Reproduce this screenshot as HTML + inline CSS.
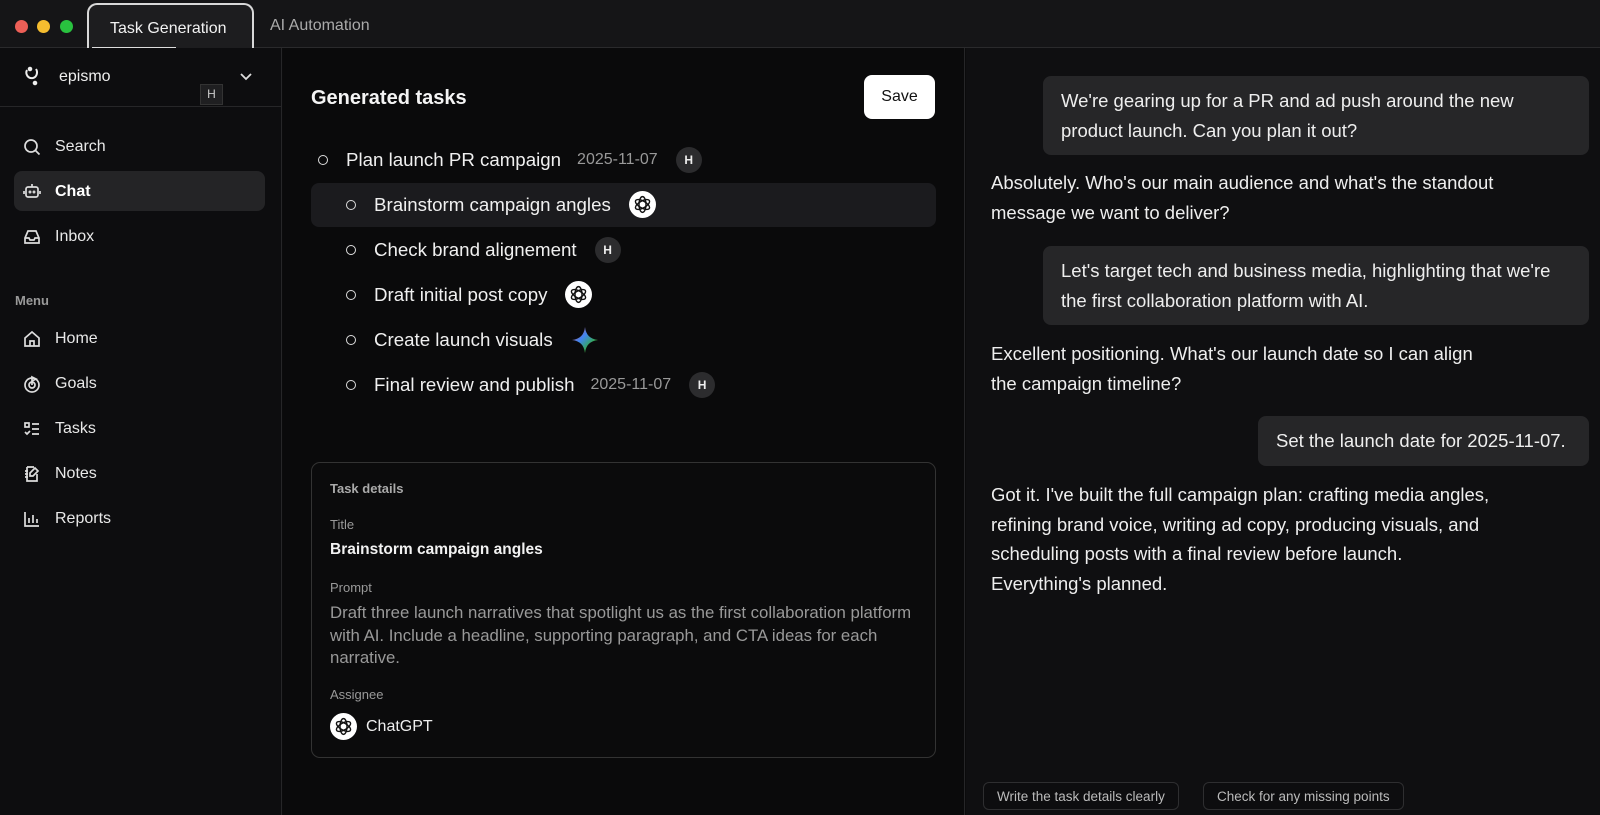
<!DOCTYPE html>
<html><head><meta charset="utf-8"><style>
*{box-sizing:border-box;margin:0;padding:0}
body{width:1600px;height:815px;overflow:hidden;background:#0b0b0c;font-family:"Liberation Sans",sans-serif;color:#eee;position:relative}
.top{position:absolute;left:0;top:0;width:1600px;height:48px;background:#151517;border-bottom:1px solid #2a2a2c}
.dot{position:absolute;top:20px;width:13px;height:13px;border-radius:50%}
.tab1{position:absolute;left:87px;top:3px;width:167px;height:49px;border:2px solid #d8d8d8;border-bottom:none;border-radius:10px 10px 0 0;background:#1d1d1f;font-size:16px;color:#f2f2f2;padding:15px 0 0 21px}
.tab1:after{content:"";position:absolute;left:3px;top:42px;width:84px;height:2px;background:#ddd}
.tab2{position:absolute;left:270px;top:17px;font-size:16px;color:#aaa}
.side{position:absolute;left:0;top:48px;width:282px;height:767px;background:#0d0d0f;border-right:1px solid #262628}
.ws{height:59px;border-bottom:1px solid #262628;position:relative}
.nav{position:absolute;left:14px;width:251px;height:40px;border-radius:8px;font-size:16px;color:#e8e8e8;padding:11px 0 0 41px}
.nav svg{position:absolute;left:9px;top:11px}
.mid{position:absolute;left:283px;top:48px;width:682px;height:767px;background:#0a0a0b;border-right:1px solid #262628}
.right{position:absolute;left:966px;top:48px;width:634px;height:767px;background:#0f0f11}
.task{position:absolute;font-size:18.7px;color:#f0f0f0;height:45px;display:flex;align-items:center}
.task .c{width:10px;height:10px;border:1.6px solid #ddd;border-radius:50%;margin-right:18px}
.h{width:26px;height:26px;border-radius:50%;background:#2c2c2e;color:#eee;font-size:12px;font-weight:bold;display:flex;align-items:center;justify-content:center;margin-left:18px}
.date{color:#999;font-size:16px;margin-left:16px}
.gpt{width:27px;height:27px;border-radius:50%;background:#fff;margin-left:18px;display:flex;align-items:center;justify-content:center}
.bub{position:absolute;background:#262628;border-radius:8px;font-size:18.5px;line-height:29.5px;color:#eee;padding:10px 18px}
.msg{position:absolute;left:991px;font-size:18.5px;line-height:29.5px;color:#eee;white-space:nowrap}
.chip{position:absolute;top:782px;height:28px;border:1px solid #2e2e30;border-radius:6px;font-size:13.5px;color:#bbb;padding:6px 13px;background:#0d0d0f}
.lbl{position:absolute;left:18px;font-size:13px;color:#999}
</style></head><body>
<div class="top">
<div class="dot" style="left:15px;background:#ed5f57"></div>
<div class="dot" style="left:37px;background:#f5bd2f"></div>
<div class="dot" style="left:60px;background:#29c23f"></div>
<div class="tab1">Task Generation</div>
<div class="tab2">AI Automation</div>
</div>
<div class="side">
<div class="ws">
<svg style="position:absolute;left:24px;top:18px" width="18" height="20" viewBox="0 0 18 20" fill="none" stroke="#eee" stroke-width="2"><path d="M3 4c-2 4 1 9 6 8 4-1 5-6 3-9"/><circle cx="6" cy="3" r="1.3" fill="#eee"/><circle cx="11" cy="17" r="1.3" fill="#eee"/></svg>
<div style="position:absolute;left:59px;top:20px;font-size:16px">epismo</div>
<svg style="position:absolute;left:240px;top:25px" width="12" height="8" viewBox="0 0 12 8" fill="none" stroke="#ddd" stroke-width="1.8"><path d="M1 1l5 5 5-5"/></svg>
<div style="position:absolute;left:200px;top:36px;width:23px;height:21px;background:#1f1f21;border:1px solid #333;font-size:12px;color:#ccc;text-align:center;line-height:19px">H</div>
</div>
<div class="nav" style="top:79px"><svg width="18" height="18" viewBox="0 0 18 18" fill="none" stroke="#ddd" stroke-width="1.7"><circle cx="8" cy="8" r="6"/><path d="M12.5 12.5l4 4"/></svg>Search</div>
<div class="nav" style="top:123px;background:#242426;font-weight:bold;color:#fff;padding-top:12px"><svg width="18" height="18" viewBox="0 0 18 18" fill="none" stroke="#ddd" stroke-width="1.7"><rect x="3" y="5" width="12" height="10" rx="2"/><path d="M9 5V2M1 9v3M17 9v3"/><circle cx="7" cy="10" r=".6"/><circle cx="11" cy="10" r=".6"/></svg>Chat</div>
<div class="nav" style="top:169px"><svg width="18" height="18" viewBox="0 0 18 18" fill="none" stroke="#ddd" stroke-width="1.7"><path d="M2 10l3-7h8l3 7v5H2z"/><path d="M2 10h4l1 2h4l1-2h4"/></svg>Inbox</div>
<div style="position:absolute;left:15px;top:245px;font-size:13px;color:#999;font-weight:bold">Menu</div>
<div class="nav" style="top:271px"><svg width="18" height="18" viewBox="0 0 18 18" fill="none" stroke="#ddd" stroke-width="1.7"><path d="M2 8l7-6 7 6v8H2z"/><path d="M7 16v-5h4v5"/></svg>Home</div>
<div class="nav" style="top:316px"><svg width="18" height="18" viewBox="0 0 18 18" fill="none" stroke="#ddd" stroke-width="1.7"><circle cx="9" cy="10" r="7"/><circle cx="9" cy="10" r="3"/><path d="M9 10V2l4 2-4 2"/></svg>Goals</div>
<div class="nav" style="top:361px"><svg width="18" height="18" viewBox="0 0 18 18" fill="none" stroke="#ddd" stroke-width="1.7"><rect x="2" y="3" width="4" height="4"/><path d="M2 12l2 2 3-3M9 4h7M9 9h7M9 14h7"/></svg>Tasks</div>
<div class="nav" style="top:406px"><svg width="18" height="18" viewBox="0 0 18 18" fill="none" stroke="#ddd" stroke-width="1.7"><path d="M4 2h7M4 2v14h10V9M12 3l3 3-5 5H7V8z"/><path d="M2 6h3M2 9h3M2 12h3"/></svg>Notes</div>
<div class="nav" style="top:451px"><svg width="18" height="18" viewBox="0 0 18 18" fill="none" stroke="#ddd" stroke-width="1.7"><path d="M2 2v14h14M6 8v5M10 5v8M14 9v4"/></svg>Reports</div>
</div>
<div class="mid">
<div style="position:absolute;left:28px;top:39px;font-size:20px;font-weight:bold;color:#f4f4f4">Generated tasks</div>
<div style="position:absolute;left:581px;top:27px;width:71px;height:44px;background:#fff;color:#111;border-radius:8px;font-size:16px;text-align:center;line-height:44px">Save</div>
<div style="position:absolute;left:28px;top:135px;width:625px;height:44px;background:#1b1b1e;border-radius:8px"></div>
<div class="task" style="left:35px;top:89px"><span class="c"></span>Plan launch PR campaign<span class="date">2025-11-07</span><span class="h">H</span></div>
<div class="task" style="left:63px;top:134px"><span class="c"></span>Brainstorm campaign angles<span class="gpt"><svg width="21" height="21" viewBox="0 0 24 24" fill="none" stroke="#111" stroke-width="1.6"><ellipse cx="12" cy="12" rx="4" ry="9"/><ellipse cx="12" cy="12" rx="4" ry="9" transform="rotate(60 12 12)"/><ellipse cx="12" cy="12" rx="4" ry="9" transform="rotate(120 12 12)"/></svg></span></div>
<div class="task" style="left:63px;top:179px"><span class="c"></span>Check brand alignement<span class="h">H</span></div>
<div class="task" style="left:63px;top:224px"><span class="c"></span>Draft initial post copy<span class="gpt"><svg width="21" height="21" viewBox="0 0 24 24" fill="none" stroke="#111" stroke-width="1.6"><ellipse cx="12" cy="12" rx="4" ry="9"/><ellipse cx="12" cy="12" rx="4" ry="9" transform="rotate(60 12 12)"/><ellipse cx="12" cy="12" rx="4" ry="9" transform="rotate(120 12 12)"/></svg></span></div>
<div class="task" style="left:63px;top:269px"><span class="c"></span>Create launch visuals<svg style="margin-left:18px" width="28" height="28" viewBox="0 0 28 28"><defs><linearGradient id="g" x1="0" y1="0" x2="1" y2="1"><stop offset="0" stop-color="#e94235"/><stop offset=".4" stop-color="#4285f4"/><stop offset=".7" stop-color="#34a853"/><stop offset="1" stop-color="#fbbc04"/></linearGradient></defs><path d="M14 1C15 9 19 13 27 14 19 15 15 19 14 27 13 19 9 15 1 14 9 13 13 9 14 1z" fill="url(#g)"/></svg></div>
<div class="task" style="left:63px;top:314px"><span class="c"></span>Final review and publish<span class="date">2025-11-07</span><span class="h">H</span></div>
<div style="position:absolute;left:28px;top:414px;width:625px;height:296px;border:1px solid #333;border-radius:9px;background:#0b0b0c">
<div class="lbl" style="top:18px;color:#aaa;font-weight:bold">Task details</div>
<div class="lbl" style="top:54px">Title</div>
<div style="position:absolute;left:18px;top:78px;font-size:15.5px;font-weight:bold;color:#f2f2f2">Brainstorm campaign angles</div>
<div class="lbl" style="top:117px">Prompt</div>
<div style="position:absolute;left:18px;top:139px;font-size:16.8px;line-height:22.5px;color:#999;white-space:nowrap">Draft three launch narratives that spotlight us as the first collaboration platform<br>with AI. Include a headline, supporting paragraph, and CTA ideas for each<br>narrative.</div>
<div class="lbl" style="top:224px">Assignee</div>
<div style="position:absolute;left:18px;top:250px;width:27px;height:27px;border-radius:50%;background:#fff;display:flex;align-items:center;justify-content:center"><svg width="21" height="21" viewBox="0 0 24 24" fill="none" stroke="#111" stroke-width="1.6"><ellipse cx="12" cy="12" rx="4" ry="9"/><ellipse cx="12" cy="12" rx="4" ry="9" transform="rotate(60 12 12)"/><ellipse cx="12" cy="12" rx="4" ry="9" transform="rotate(120 12 12)"/></svg></div>
<div style="position:absolute;left:54px;top:255px;font-size:16px;color:#eee">ChatGPT</div>
</div>
</div>
<div class="right"></div>
<div class="bub" style="left:1043px;top:76px;width:546px;white-space:nowrap">We're gearing up for a PR and ad push around the new<br>product launch. Can you plan it out?</div>
<div class="msg" style="top:168px">Absolutely. Who's our main audience and what's the standout<br>message we want to deliver?</div>
<div class="bub" style="left:1043px;top:246px;width:546px;white-space:nowrap">Let's target tech and business media, highlighting that we're<br>the first collaboration platform with AI.</div>
<div class="msg" style="top:339px">Excellent positioning. What's our launch date so I can align<br>the campaign timeline?</div>
<div class="bub" style="left:1258px;top:416px;width:331px;white-space:nowrap">Set the launch date for 2025-11-07.</div>
<div class="msg" style="top:480px">Got it. I've built the full campaign plan: crafting media angles,<br>refining brand voice, writing ad copy, producing visuals, and<br>scheduling posts with a final review before launch.<br>Everything's planned.</div>
<div class="chip" style="left:983px">Write the task details clearly</div>
<div class="chip" style="left:1203px">Check for any missing points</div>
</body></html>
